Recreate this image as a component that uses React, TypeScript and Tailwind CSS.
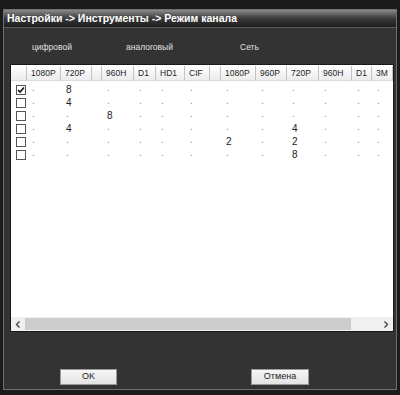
const cols = [
  { key: "cb", label: "" },
  { key: "d1080", label: "1080P" },
  { key: "d720", label: "720P" },
  { key: "s1", label: "" },
  { key: "a960h", label: "960H" },
  { key: "ad1", label: "D1" },
  { key: "ahd1", label: "HD1" },
  { key: "acif", label: "CIF" },
  { key: "s2", label: "" },
  { key: "n1080", label: "1080P" },
  { key: "n960", label: "960P" },
  { key: "n720", label: "720P" },
  { key: "n960h", label: "960H" },
  { key: "nd1", label: "D1" },
  { key: "n3m", label: "3M" },
];

const gridCols =
  "grid grid-cols-[16px_34px_31px_10px_32px_22px_29px_25px_11px_35px_31px_32px_33px_20px_21px]";

// values per row, keyed by column; missing = "."
const rows: { checked: boolean; vals: Record<string, string> }[] = [
  { checked: true, vals: { d720: "8" } },
  { checked: false, vals: { d720: "4" } },
  { checked: false, vals: { a960h: "8" } },
  { checked: false, vals: { d720: "4", n720: "4" } },
  { checked: false, vals: { n1080: "2", n720: "2" } },
  { checked: false, vals: { n720: "8" } },
];

function Checkbox({ checked }: { checked: boolean }) {
  return (
    <div className="ml-[5px] w-[10px] h-[10px] border border-[#555] bg-white flex items-center justify-center">
      {checked && (
        <svg width="8" height="8" viewBox="0 0 8 8">
          <path d="M1 4 L3 6 L7 1.5" fill="none" stroke="#111" strokeWidth="1.6" />
        </svg>
      )}
    </div>
  );
}

export default function App() {
  return (
    <div
      className="w-[400px] h-[395px] bg-[#1b1b1b] pt-[9px] pb-[5px] px-[3px]"
      style={{ fontFamily: '"Liberation Sans", Arial, sans-serif' }}
    >
      <div className="h-full border border-[#707070] bg-[#333333] flex flex-col">
        {/* Title bar */}
        <div className="h-[18px] bg-gradient-to-b from-[#8a8a8a] via-[#3a3a3a] to-[#1c1c1c] border-b border-[#5c5c5c] flex items-center pl-[3px]">
          <span className="text-white font-bold text-[10.5px] leading-none">
            Настройки -&gt; Инструменты -&gt; Режим канала
          </span>
        </div>

        {/* Group labels */}
        <div className="h-[36px] flex items-end pb-[10px] pl-[28px] text-[8.5px] text-[#e0e0e0]">
          <span className="w-[94px]">цифровой</span>
          <span className="w-[114px]">аналоговый</span>
          <span>Сеть</span>
        </div>

        {/* Table */}
        <div className="h-[268px] ml-[6px] w-[384px] border border-[#1a1a1a] bg-white flex flex-col">
          <div className={`${gridCols} h-[15px] mt-[1px] text-[8.5px] text-[#222]`}>
            {cols.map((c) => (
              <div
                key={c.key}
                className="bg-gradient-to-b from-white to-[#ececec] border-r border-[#c4c4c4] border-b border-b-[#dcdcdc] flex items-center pl-[4px]"
              >
                {c.label}
              </div>
            ))}
          </div>

          <div className="flex-1 pt-[2px]">
            {rows.map((r, i) => (
              <div key={i} className={`${gridCols} h-[13px] items-center text-[10px] text-[#222]`}>
                {cols.map((c) => {
                  if (c.key === "cb") return <Checkbox key={c.key} checked={r.checked} />;
                  if (c.key === "s1" || c.key === "s2") return <div key={c.key} />;
                  const v = r.vals[c.key];
                  return (
                    <div key={c.key} className={`pl-[5px] leading-none ${v ? "" : "text-[#888] -mt-[3px]"}`}>
                      {v ?? "."}
                    </div>
                  );
                })}
              </div>
            ))}
          </div>

          {/* Horizontal scrollbar */}
          <div className="h-[14px] bg-[#f0f0f0] flex items-center">
            <div className="w-[14px] h-full flex items-center justify-center">
              <svg width="6" height="7" viewBox="0 0 6 7">
                <path d="M4.5 0.5 L1.5 3.5 L4.5 6.5" fill="none" stroke="#444" strokeWidth="1.4" />
              </svg>
            </div>
            <div className="w-[326px] h-[12px] bg-[#cdcdcd]" />
            <div className="flex-1" />
            <div className="w-[14px] h-full flex items-center justify-center">
              <svg width="6" height="7" viewBox="0 0 6 7">
                <path d="M1.5 0.5 L4.5 3.5 L1.5 6.5" fill="none" stroke="#444" strokeWidth="1.4" />
              </svg>
            </div>
          </div>
        </div>

        {/* Buttons */}
        <div className="mt-[37px] h-[16px] flex pl-[56px] gap-[134px]">
          <button className="w-[57px] h-[16px] bg-gradient-to-b from-[#f7f7f7] to-[#e3e3e3] border border-[#9a9a9a] text-[9px] font-normal text-[#222]">
            OK
          </button>
          <button className="w-[58px] h-[16px] bg-gradient-to-b from-[#f7f7f7] to-[#e3e3e3] border border-[#9a9a9a] text-[9px] font-normal text-[#222]">
            Отмена
          </button>
        </div>
      </div>
    </div>
  );
}
